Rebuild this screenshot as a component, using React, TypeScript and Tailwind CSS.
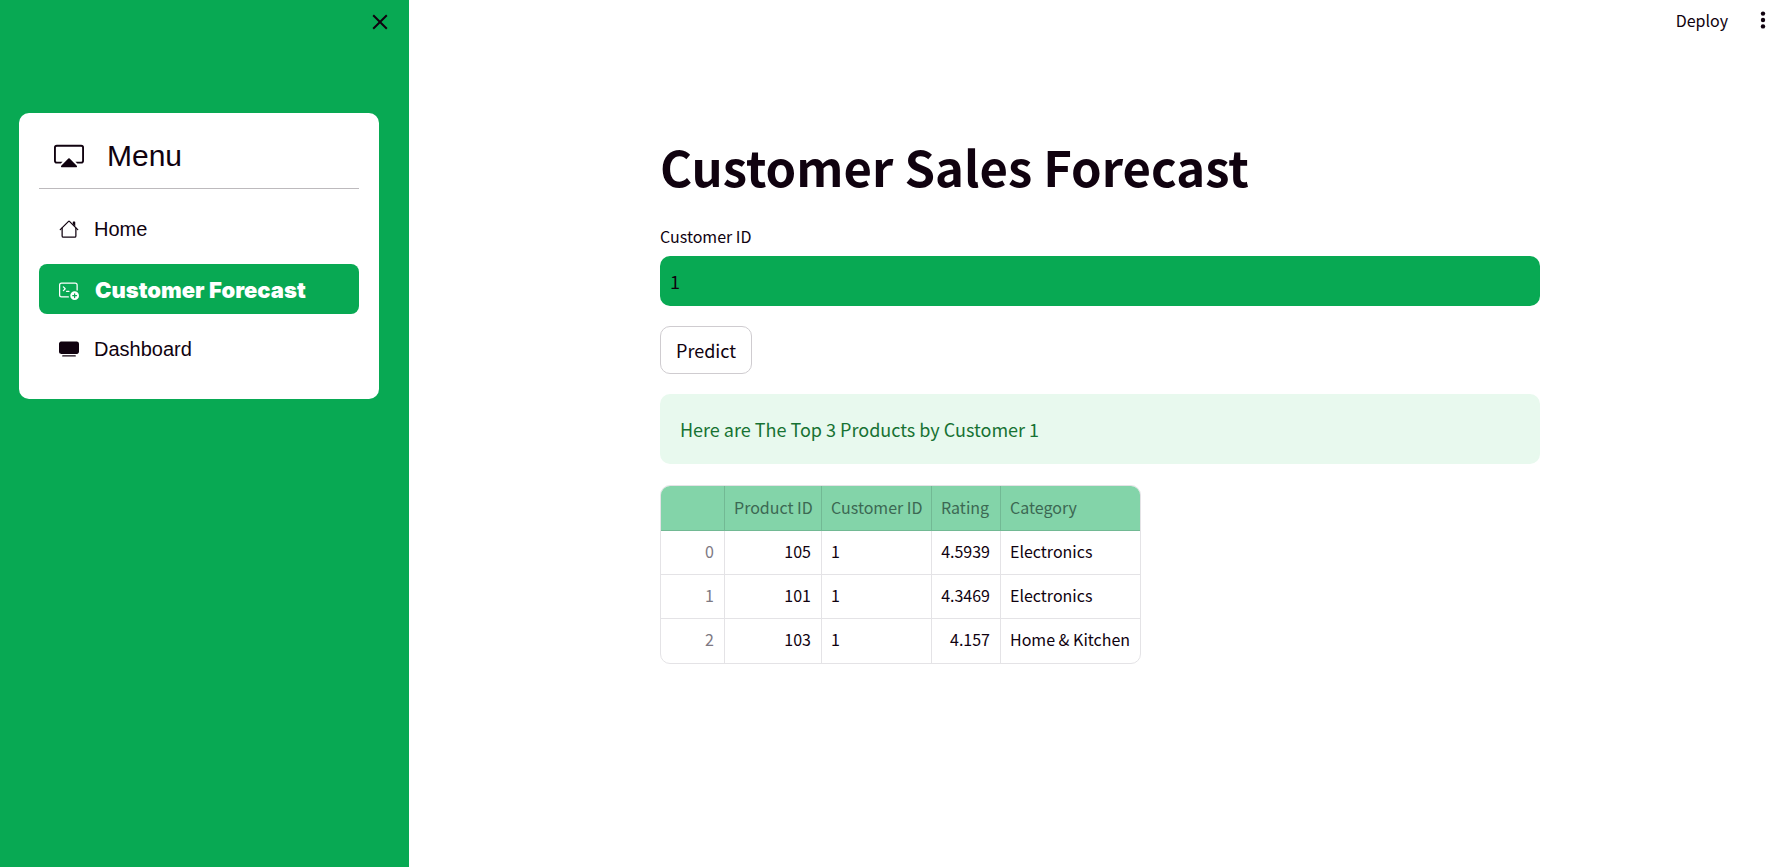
import { useState } from "react";
import type { ReactNode } from "react";
import { BsCast, BsTerminalPlus, BsTvFill } from "react-icons/bs";

function HouseIcon() {
  return (
    <svg width="20" height="20" viewBox="0 0 16 16" fill="currentColor" aria-hidden="true">
      <path
        fillRule="evenodd"
        d="M2 13.5V7h1v6.5a.5.5 0 0 0 .5.5h9a.5.5 0 0 0 .5-.5V7h1v6.5a1.5 1.5 0 0 1-1.5 1.5h-9A1.5 1.5 0 0 1 2 13.5zm11-11V6l-2-2V2.5a.5.5 0 0 1 .5-.5h1a.5.5 0 0 1 .5.5z"
      />
      <path
        fillRule="evenodd"
        d="M7.293 1.5a1 1 0 0 1 1.414 0l6.647 6.646a.5.5 0 0 1-.708.708L8 2.207 1.354 8.854a.5.5 0 1 1-.708-.708L7.293 1.5z"
      />
    </svg>
  );
}

function CloseIcon() {
  return (
    <svg width="16" height="16" viewBox="0 0 16 16" fill="none" stroke="currentColor" strokeWidth="2" aria-hidden="true">
      <path d="M1.2 1.2 14.8 14.8M14.8 1.2 1.2 14.8" />
    </svg>
  );
}

function DotsIcon() {
  return (
    <svg width="6" height="18" viewBox="0 0 6 18" fill="currentColor" aria-hidden="true">
      <circle cx="3" cy="2.6" r="2.2" />
      <circle cx="3" cy="9" r="2.2" />
      <circle cx="3" cy="15.4" r="2.2" />
    </svg>
  );
}

function NavItem({ icon, label, active = false }: { icon: ReactNode; label: string; active?: boolean }) {
  return (
    <li>
      <a
        href="#"
        aria-current={active ? "page" : undefined}
        className={
          active
            ? "flex h-[50px] items-center gap-4 rounded-lg bg-[#08a953] px-5 pt-[2px] font-['Inter',sans-serif] text-[22px] font-black whitespace-nowrap text-white"
            : "flex h-[50px] items-center gap-[15px] rounded-lg px-5 text-xl"
        }
      >
        {icon}
        {label}
      </a>
    </li>
  );
}

const rows = [
  { product: "105", customer: "1", rating: "4.5939", category: "Electronics" },
  { product: "101", customer: "1", rating: "4.3469", category: "Electronics" },
  { product: "103", customer: "1", rating: "4.157", category: "Home & Kitchen" },
];

function ProductTable() {
  return (
    <div className="mt-[21px] w-fit overflow-hidden rounded-[10px] border border-[#e4e3e6]">
      <table className="w-[479px] table-fixed border-separate border-spacing-0 text-base leading-6 whitespace-nowrap">
        <colgroup>
          <col className="w-[64px]" />
          <col className="w-[97px]" />
          <col className="w-[110px]" />
          <col className="w-[69px]" />
          <col className="w-[139px]" />
        </colgroup>
        <thead>
          <tr className="h-[45px] bg-[#83d4a9] text-[#3c6853] [&>*]:border-b [&>*]:border-[#72b994] [&>*]:px-[9px] [&>*]:pb-[2px] [&>*]:text-left [&>*]:font-normal [&>*:not(:last-child)]:border-r">
            <td />
            <th scope="col">Product ID</th>
            <th scope="col">Customer ID</th>
            <th scope="col">Rating</th>
            <th scope="col">Category</th>
          </tr>
        </thead>
        <tbody>
          {rows.map((row, index) => (
            <tr
              key={row.product}
              className="h-11 [&>*]:border-[#e4e3e6] [&>*]:pr-[10px] [&>*]:pb-1 [&>*]:pl-[9px] [&>*:not(:last-child)]:border-r [&:not(:last-child)>*]:border-b"
            >
              <th scope="row" className="text-right font-normal text-[#7d7983]">
                {index}
              </th>
              <td className="text-right">{row.product}</td>
              <td>{row.customer}</td>
              <td className="text-right">{row.rating}</td>
              <td>{row.category}</td>
            </tr>
          ))}
        </tbody>
      </table>
    </div>
  );
}

export default function App() {
  const [customerId, setCustomerId] = useState("1");

  return (
    <div className="flex min-h-screen bg-white font-['Noto_Sans_CJK_SC',sans-serif] text-[#10020f]">
      <aside className="w-[409px] shrink-0 bg-[#08a953] pl-[19px]">
        <div className="flex h-[113px] items-start justify-end pr-[21px] pt-[14px]">
          <button type="button" aria-label="Close sidebar">
            <CloseIcon />
          </button>
        </div>
        <nav
          aria-label="Menu"
          className="w-[360px] rounded-[10px] bg-white px-5 pb-[25px] font-['Liberation_Sans',sans-serif]"
        >
          <div className="flex h-[76px] items-center gap-[23px] border-b border-[#bdbabd] px-[15px] pt-[10px]">
            <BsCast size={30} aria-hidden="true" />
            <span className="text-[30px] leading-10">Menu</span>
          </div>
          <ul className="flex flex-col gap-[10px] pt-[15px]">
            <NavItem icon={<HouseIcon />} label="Home" />
            <NavItem icon={<BsTerminalPlus size={20} aria-hidden="true" />} label="Customer Forecast" active />
            <NavItem icon={<BsTvFill size={20} aria-hidden="true" />} label="Dashboard" />
          </ul>
        </nav>
      </aside>

      <div className="flex min-w-0 flex-1 flex-col">
        <header className="flex h-10 items-center justify-end gap-8 pr-4">
          <button type="button" className="text-base leading-6">
            Deploy
          </button>
          <button type="button" aria-label="More options">
            <DotsIcon />
          </button>
        </header>

        <main className="flex flex-col items-center pl-[9px]">
          <div className="w-full max-w-[880px]">
            <h1 className="pt-[93px] text-[49px] font-bold leading-[66px]">Customer Sales Forecast</h1>
            <label htmlFor="customer-id" className="mt-[25px] block text-base leading-6">
              Customer ID
            </label>
            <input
              id="customer-id"
              type="text"
              value={customerId}
              onChange={(event) => setCustomerId(event.target.value)}
              className="mt-2 block h-[50px] w-full rounded-[10px] bg-[#08a953] px-[10px] text-lg outline-none"
            />
            <button
              type="button"
              className="mt-5 block h-12 rounded-[10px] border border-[#cfccd0] px-[15px] text-lg leading-7"
            >
              Predict
            </button>
            <p role="status" className="mt-5 rounded-[10px] bg-[#e8f9ee] px-5 py-5 text-lg leading-[30px] text-[#177233]">
              Here are The Top 3 Products by Customer 1
            </p>
            <ProductTable />
          </div>
        </main>
      </div>
    </div>
  );
}
